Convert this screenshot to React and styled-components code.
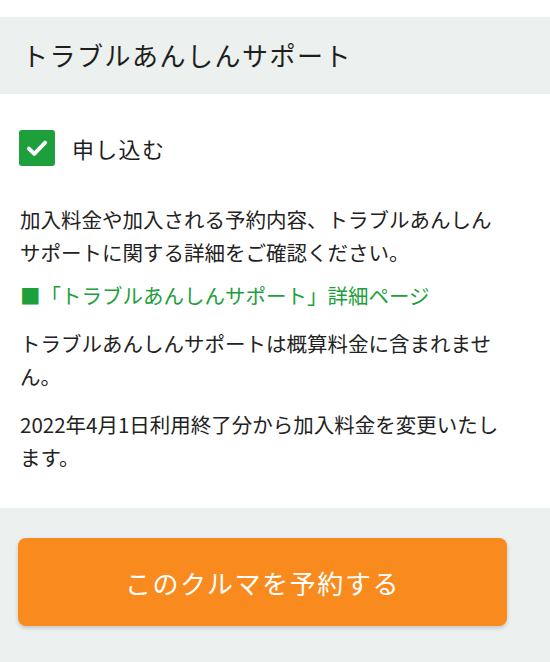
import { styled, createGlobalStyle } from 'styled-components'

const GlobalStyle = createGlobalStyle`
  html, body {
    margin: 0;
    padding: 0;
    background: #ffffff;
  }
  body {
    font-family: "Noto Sans CJK JP", "Noto Sans", sans-serif;
    color: #222222;
  }
`

const Page = styled.div`
  width: 550px;
  height: 662px;
  display: flex;
  flex-direction: column;
  background: #ffffff;
  padding-top: 17px;
  box-sizing: border-box;
`

const Header = styled.div`
  height: 77px;
  background: #ecf0ee;
  display: flex;
  align-items: center;
  padding-left: 22px;
  padding-bottom: 3px;
  box-sizing: border-box;
`

const Title = styled.h2`
  margin: 0;
  font-size: 26px;
  font-weight: 400;
  letter-spacing: 1.5px;
  color: #1e1e1e;
`

const Body = styled.div`
  padding: 36px 44px 34px 20px;
`

const CheckRow = styled.label`
  display: flex;
  align-items: center;
  gap: 17px;
  margin-left: -1px;
`

const Box = styled.span`
  width: 36px;
  height: 36px;
  border-radius: 3px;
  background: #1d9f3b;
  display: flex;
  align-items: center;
  justify-content: center;
`

const CheckLabel = styled.span`
  font-size: 22px;
  letter-spacing: 1.3px;
  color: #1e1e1e;
`

const Notes = styled.div`
  margin-top: 37px;
  display: flex;
  flex-direction: column;
  gap: 15px;
`

const Para = styled.p`
  margin: 0;
  font-size: 20.5px;
  line-height: 33px;
  color: #222222;
`

const DetailLink = styled.a`
  display: block;
  margin: -5px 0 0;
  font-size: 20.5px;
  line-height: 33px;
  color: #1d9f3b;
  text-decoration: none;
`

const Footer = styled.div`
  flex: 1;
  background: #ecf0ee;
  padding: 30px 43px 0 18px;
`

const ReserveButton = styled.button`
  width: 100%;
  height: 88px;
  border: none;
  border-radius: 8px;
  background: #f98a1e;
  box-shadow: 0 2px 4px rgba(0, 0, 0, 0.18);
  color: #ffffff;
  font-family: "Noto Sans CJK JP", "Noto Sans", sans-serif;
  font-size: 26px;
  font-weight: 400;
  letter-spacing: 1.6px;
  cursor: pointer;
`

export default function App() {
  return (
    <>
      <GlobalStyle />
      <Page>
        <Header>
          <Title>トラブルあんしんサポート</Title>
        </Header>
        <Body>
          <CheckRow>
            <Box>
              <svg width="26" height="26" viewBox="0 0 24 24">
                <polyline points="4.5,12.5 9.5,17.5 19.5,7" fill="none" stroke="#ffffff" strokeWidth="3.6" strokeLinecap="round" strokeLinejoin="round" />
              </svg>
            </Box>
            <CheckLabel>申し込む</CheckLabel>
          </CheckRow>
          <Notes>
            <Para>加入料金や加入される予約内容、トラブルあんしんサポートに関する詳細をご確認ください。</Para>
            <DetailLink href="#">■「トラブルあんしんサポート」詳細ページ</DetailLink>
            <Para>トラブルあんしんサポートは概算料金に含まれません。</Para>
            <Para>2022年4月1日利用終了分から加入料金を変更いたします。</Para>
          </Notes>
        </Body>
        <Footer>
          <ReserveButton>このクルマを予約する</ReserveButton>
        </Footer>
      </Page>
    </>
  )
}
